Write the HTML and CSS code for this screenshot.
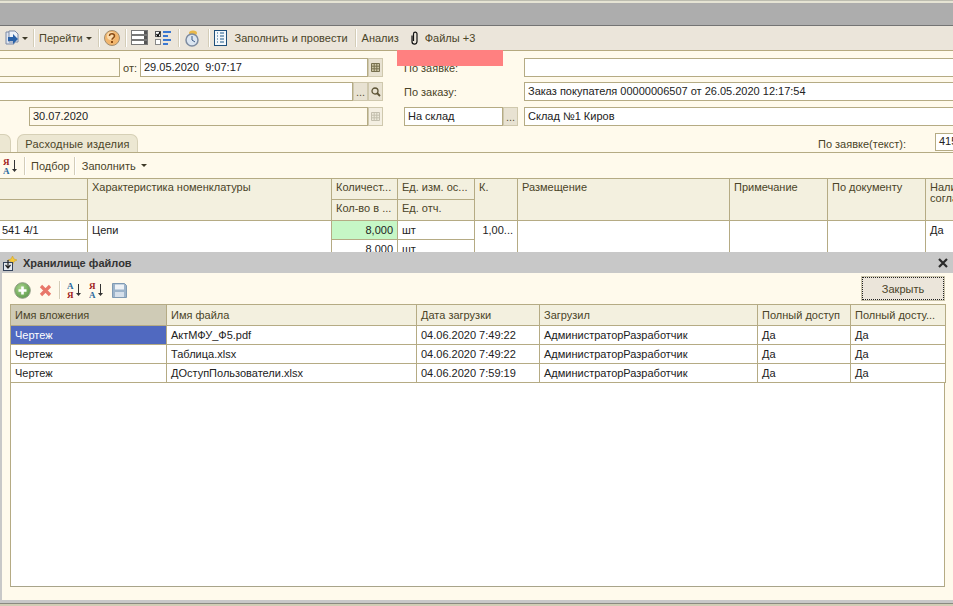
FILE: index.html
```html
<!DOCTYPE html>
<html lang="ru">

<head>
    <meta charset="UTF-8">
    <title>Хранилище файлов</title>
    <link rel="stylesheet" href="styles.css">
</head>

<body>
    <div class="screen">
        <div class="back">
            <div class="top-strip"></div>
            <div class="grey-band"></div>
            <div class="toolbar">
                <svg class="ic-go" width="15" height="16" viewBox="0 0 15 16"><path d="M1 2h6l2 2v10H1z" fill="#dfe6f2" stroke="#7d8aa5"/><path d="M4 1h6l3 3v8H4z" fill="#eef2f8" stroke="#7d8aa5"/><path d="M3 7h5V4l5 5-5 5v-3H3z" fill="#2a62a8"/></svg>
                <span class="arrow arrow-a"></span>
                <span class="sep sep-a"></span>
                <span class="tool tool-go">Перейти</span>
                <span class="arrow arrow-b"></span>
                <span class="sep sep-b"></span>
                <svg class="ic-help" width="16" height="16" viewBox="0 0 16 16"><circle cx="8" cy="8" r="7.500" fill="#f2b66e" stroke="#a08d70"/><circle cx="7" cy="6" r="4" fill="#fbdcae"/><path d="M5.500 6c0-3.300 5-3 5 0 0 1.800-2.500 1.800-2.500 3.800" fill="none" stroke="#8a4a12" stroke-width="1.500"/><rect x="7" y="11" width="2" height="2" fill="#8a4a12"/></svg>
                <span class="sep sep-c"></span>
                <svg class="ic-rows" width="17" height="16" viewBox="0 0 17 16"><g fill="#fff" stroke="#777"><rect x=".5" y=".5" width="16" height="4"/><rect x=".5" y="5.500" width="16" height="4"/><rect x=".5" y="10.500" width="16" height="4"/></g><g fill="#555"><rect x="13" y="1" width="3" height="3"/><rect x="13" y="6" width="3" height="3"/><rect x="13" y="11" width="3" height="3"/></g></svg>
                <svg class="ic-checks" width="18" height="16" viewBox="0 0 18 16"><rect x=".5" y="1.500" width="5" height="5" fill="#fff" stroke="#555"/><path d="M1.500 4l1.500 2 2-4" fill="none" stroke="#000" stroke-width="1.300"/><rect x=".5" y="9.500" width="5" height="5" fill="#fff" stroke="#888"/><g fill="#3b78d0"><rect x="8" y="1" width="8" height="2"/><rect x="8" y="5" width="5" height="2"/><rect x="8" y="9" width="8" height="2"/><rect x="8" y="13" width="5" height="2"/></g></svg>
                <span class="sep sep-d"></span>
                <svg class="ic-clock" width="15" height="17" viewBox="0 0 15 17"><ellipse cx="8" cy="3" rx="4" ry="2.500" fill="#e8b84a"/><circle cx="7" cy="10" r="6" fill="#dbe5f0" stroke="#7d8ba0" stroke-width="1.500"/><path d="M7 6v4l3 2" fill="none" stroke="#3d5a85"/></svg>
                <span class="sep sep-e"></span>
                <svg class="ic-doc" width="13" height="16" viewBox="0 0 13 16"><rect x=".5" y=".5" width="12" height="15" fill="#f4f8fb" stroke="#1e4f7a"/><path d="M3 3h1m2 0h4M3 6h1m2 0h4M3 9h1m2 0h4M3 12h1m2 0h4" stroke="#1e5a8a"/></svg>
                <span class="tool tool-fill">Заполнить и провести</span>
                <span class="sep sep-f"></span>
                <span class="tool">Анализ</span>
                <svg class="ic-clip" width="7" height="14" viewBox="0 0 7 14"><path d="M1 4.500v6c0 3.500 5 3.500 5 0V3C6 .5 2.500.5 2.500 3v7" fill="none" stroke="#111" stroke-width="1.200"/></svg>
                <span class="tool">Файлы +3</span>
            </div>

            <div class="form">
                <div class="form-row">
                    <div class="field field-num ro"></div>
                    <span class="lbl lbl-from">от:</span>
                    <div class="field field-date">29.05.2020&nbsp; 9:07:17</div>
                    <div class="fbtn">
                        <svg width="9" height="9" viewBox="0 0 9 9"><path d="M.5.500h8v8h-8zM.5 3.200h8M.5 5.800h8M3.200.5v8M5.800.5v8" fill="#cfc8a8" stroke="#77704f"/></svg>
                    </div>
                    <span class="lbl lbl-right">По заявке:</span>
                    <div class="field field-wide"></div>
                </div>
                <div class="form-row">
                    <div class="field field-long"></div>
                    <div class="fbtn">...</div>
                    <div class="fbtn">
                        <svg width="10" height="10" viewBox="0 0 10 10"><circle cx="4" cy="4" r="3" fill="none" stroke="#5d5436" stroke-width="1.300"/><path d="M6 6l3 3" stroke="#5d5436" stroke-width="1.800"/></svg>
                    </div>
                    <span class="lbl lbl-right">По заказу:</span>
                    <div class="field field-wide">Заказ покупателя 00000006507 от 26.05.2020 12:17:54</div>
                </div>
                <div class="form-row form-row-last">
                    <div class="field field-plan ro">30.07.2020</div>
                    <div class="fbtn off">
                        <svg width="9" height="9" viewBox="0 0 9 9"><path d="M.5.500h8v8h-8zM.5 3.200h8M.5 5.800h8M3.200.5v8M5.800.5v8" fill="#eeeadb" stroke="#c4bfae"/></svg>
                    </div>
                    <div class="field field-store">На склад</div>
                    <div class="fbtn">...</div>
                    <div class="field field-wide field-stock">Склад №1 Киров</div>
                </div>
            </div>

            <div class="tabs">
                <div class="tab tab-cut"></div>
                <div class="tab">Расходные изделия</div>
                <span class="lbl lbl-text">По заявке(текст):</span>
                <div class="field field-text">415</div>
            </div>

            <div class="subbar">
                <svg class="ic-sort" width="15" height="18" viewBox="0 0 15 18"><text x="0" y="8" class="sort-red">Я</text><text x="0" y="17" class="sort-blue">А</text><path d="M11.500 3v11" stroke="#333"/><path d="M9 12l2.500 3 2.500-3z" fill="#333"/></svg>
                <span class="sep sep-g"></span>
                <span class="tool">Подбор</span>
                <span class="sep sep-h"></span>
                <span class="tool">Заполнить</span>
                <span class="arrow arrow-c"></span>
            </div>

            <table class="grid main-grid">
                <colgroup>
                    <col class="m0"><col class="m1"><col class="m2"><col class="m3"><col class="m4"><col class="m5"><col class="m6"><col class="m7"><col class="m8">
                </colgroup>
                <tr class="head-row">
                    <th></th>
                    <th rowspan="2">Характеристика номенклатуры</th>
                    <th>Количест...</th>
                    <th>Ед. изм. ос...</th>
                    <th rowspan="2">К.</th>
                    <th rowspan="2">Размещение</th>
                    <th rowspan="2">Примечание</th>
                    <th rowspan="2">По документу</th>
                    <th rowspan="2">Наличие согласовано</th>
                </tr>
                <tr class="head-row">
                    <th></th>
                    <th>Кол-во в ...</th>
                    <th>Ед. отч.</th>
                </tr>
                <tr>
                    <td class="flush">541 4/1</td>
                    <td rowspan="2" class="top">Цепи</td>
                    <td class="num green">8,000</td>
                    <td>шт</td>
                    <td rowspan="2" class="num top">1,00...</td>
                    <td rowspan="2"></td>
                    <td rowspan="2"></td>
                    <td rowspan="2"></td>
                    <td rowspan="2" class="top">Да</td>
                </tr>
                <tr>
                    <td></td>
                    <td class="num">8,000</td>
                    <td>шт</td>
                </tr>
            </table>
        </div>

        <div class="dialog">
            <div class="title-bar">
                <svg class="ic-title" width="15" height="15" viewBox="0 0 15 15"><path d="M9.500 0l1.500 3 3 1-3 1.500L9.500 9 8 5.500 5 4l3-1z" fill="#f5c83a" stroke="#c99a1c" stroke-width=".5"/><rect x=".5" y="6.500" width="9" height="8" fill="#e4e8ee" stroke="#33425a"/><path d="M5 4v7M2.500 9L5 12l2.500-3" fill="none" stroke="#222" stroke-width="1.200"/></svg>
                <span class="title-text">Хранилище файлов</span>
                <svg class="ic-close" width="10" height="10" viewBox="0 0 10 10"><path d="M1 1l8 8M9 1l-8 8" stroke="#2a2a2a" stroke-width="2.200"/></svg>
            </div>
            <div class="dialog-body">
                <div class="dialog-bar">
                    <svg class="ic-add" width="17" height="17" viewBox="0 0 17 17"><defs><radialGradient id="gr" cx=".4" cy=".35" r=".7"><stop offset="0" stop-color="#a9d48c"/><stop offset="1" stop-color="#5c9a4a"/></radialGradient></defs><circle cx="8.500" cy="8.500" r="7.800" fill="url(#gr)" stroke="#8d9a84"/><path d="M8.500 4.500v8M4.500 8.500h8" stroke="#fff" stroke-width="2.600"/></svg>
                    <svg class="ic-del" width="13" height="13" viewBox="0 0 13 13"><path d="M2 2l9 9M11 2l-9 9" stroke="#e8776a" stroke-width="3.200"/></svg>
                    <span class="sep sep-i"></span>
                    <svg class="ic-sort2" width="15" height="18" viewBox="0 0 15 18"><text x="0" y="8" class="sort-blue">А</text><text x="0" y="17" class="sort-red">Я</text><path d="M11.500 3v11" stroke="#333"/><path d="M9 12l2.500 3 2.500-3z" fill="#333"/></svg>
                    <svg class="ic-sort3" width="15" height="18" viewBox="0 0 15 18"><text x="0" y="8" class="sort-red">Я</text><text x="0" y="17" class="sort-blue">А</text><path d="M11.500 3v11" stroke="#333"/><path d="M9 12l2.500 3 2.500-3z" fill="#333"/></svg>
                    <svg class="ic-save" width="15" height="15" viewBox="0 0 15 15"><path d="M.5.500h12l2 2v12H.5z" fill="#9db4ca" stroke="#7f9ab3"/><rect x="3" y="1.500" width="9" height="5" fill="#eef2f6"/><rect x="3" y="9" width="9" height="5" fill="#d6e0ea"/></svg>
                    <button class="close-btn">Закрыть</button>
                </div>
                <div class="files-wrap">
                    <table class="grid files-grid">
                        <colgroup>
                            <col class="f0"><col class="f1"><col class="f2"><col class="f3"><col class="f4"><col class="f5">
                        </colgroup>
                        <tr class="files-head">
                            <th class="sorted">Имя вложения</th>
                            <th>Имя файла</th>
                            <th>Дата загрузки</th>
                            <th>Загрузил</th>
                            <th>Полный доступ</th>
                            <th>Полный досту...</th>
                        </tr>
                        <tr class="file-row">
                            <td class="selected">Чертеж</td>
                            <td>АктМФУ_Ф5.pdf</td>
                            <td>04.06.2020 7:49:22</td>
                            <td>АдминистраторРазработчик</td>
                            <td>Да</td>
                            <td>Да</td>
                        </tr>
                        <tr class="file-row">
                            <td>Чертеж</td>
                            <td>Таблица.xlsx</td>
                            <td>04.06.2020 7:49:22</td>
                            <td>АдминистраторРазработчик</td>
                            <td>Да</td>
                            <td>Да</td>
                        </tr>
                        <tr class="file-row">
                            <td>Чертеж</td>
                            <td>ДОступПользователи.xlsx</td>
                            <td>04.06.2020 7:59:19</td>
                            <td>АдминистраторРазработчик</td>
                            <td>Да</td>
                            <td>Да</td>
                        </tr>
                    </table>
                </div>
            </div>
            <div class="dialog-foot"></div>
        </div>

        <div class="red-mark"></div>
    </div>
</body>

</html>
```

FILE: styles.css
```css
* {
    box-sizing: border-box;
}

body {
    margin: 0;
    font-family: "Liberation Sans", Arial, sans-serif;
    font-size: 11px;
    color: #222;
}

.screen {
    position: relative;
    display: flex;
    flex-direction: column;
    width: 953px;
    height: 606px;
    overflow: hidden;
    background-color: #fffaec;
}

.back {
    height: 252px;
    overflow: hidden;
    flex: none;
}

.top-strip {
    height: 3px;
    background-color: #e6e4d4;
    border-top: 1px solid #bdbdb0;
}

.grey-band {
    height: 23px;
    background-color: #adadad;
    border-bottom: 1px solid #747474;
}

.toolbar {
    display: flex;
    align-items: center;
    height: 25px;
    padding-left: 5px;
    background-color: #ebe5da;
    border-bottom: 1px solid #b5a97f;
}

.tool {
    color: #4a4428;
    white-space: nowrap;
}

.sep {
    flex: none;
    width: 1px;
    height: 18px;
    background-color: #d4cdb8;
    border-right: 1px solid #fff;
    box-sizing: content-box;
}

.arrow {
    flex: none;
    width: 0;
    height: 0;
    border-top: 3px solid #3e3a28;
    border-left: 3px solid transparent;
    border-right: 3px solid transparent;
}

.arrow-a { margin-left: 2px; }
.sep-a { margin-left: 5px; }
.tool-go { margin-left: 4px; }
.arrow-b { margin-left: 3px; }
.sep-b { margin-left: 6px; }
.ic-help { margin-left: 4px; }
.sep-c { margin-left: 5px; }
.ic-rows { margin-left: 4px; }
.ic-checks { margin-left: 7px; }
.sep-d { margin-left: 5px; }
.ic-clock { margin-left: 5px; }
.sep-e { margin-left: 8px; }
.ic-doc { margin-left: 4px; }
.tool-fill { margin-left: 8px; }
.sep-f { margin: 0 5px 0 7px; }
.ic-clip { margin: 0 7px 0 12px; }

.form {
    display: flex;
    flex-direction: column;
    gap: 5px;
    height: 83px;
    padding-top: 7px;
}

.form-row {
    display: flex;
    align-items: center;
    height: 19px;
}

.form-row-last {
    margin-top: 1px;
}

.field {
    flex: none;
    height: 19px;
    padding: 2px 3px;
    background-color: #fff;
    border: 1px solid #b5ab84;
    white-space: nowrap;
    overflow: hidden;
}

.ro {
    background-color: #fffaec;
}

.field-num { width: 120px; border-left: none; }
.field-date { width: 228px; }
.field-long { width: 353px; border-left: none; }
.field-plan { width: 339px; margin-left: 29px; }
.field-wide { width: 429px; border-right: none; }
.field-store { width: 99px; margin-left: 21px; }
.field-stock { margin-left: 6px; }

.fbtn {
    flex: none;
    display: flex;
    align-items: center;
    justify-content: center;
    width: 15px;
    height: 19px;
    color: #5d5436;
    background-color: #e8e2d2;
    border: 1px solid #cfc8ad;
}

.fbtn.off {
    background-color: #f4efe2;
}

.lbl {
    flex: none;
    color: #4a4428;
}

.lbl-from {
    width: 20px;
    padding-left: 3px;
}

.lbl-right {
    width: 120px;
    margin-left: 21px;
}

.tabs {
    display: flex;
    align-items: flex-end;
    height: 19px;
    border-bottom: 1px solid #b5ab84;
}

.tab {
    flex: none;
    width: 121px;
    height: 18px;
    margin-left: 6px;
    padding-top: 3px;
    text-align: center;
    color: #4a4428;
    letter-spacing: .2px;
    background-color: #ece7d2;
    border: 1px solid #d6d0b6;
    border-bottom: none;
    border-radius: 7px 7px 0 0;
}

.tab-cut {
    width: 11px;
    margin-left: 0;
    border-left: none;
    border-top-left-radius: 0;
}

.lbl-text {
    margin-left: 680px;
    width: 117px;
    padding-bottom: 2px;
}

.field-text {
    height: 18px;
    width: 30px;
    margin-bottom: 1px;
    padding-top: 1px;
    border-right: none;
}

.subbar {
    display: flex;
    align-items: center;
    height: 25px;
    padding-left: 3px;
}

.sep-g { margin: 0 5px 0 6px; }
.sep-h { margin: 0 6px 0 4px; }
.arrow-c { margin-left: 5px; }

.sort-red {
    font: bold 9px "Liberation Serif", serif;
    fill: #a02020;
}

.sort-blue {
    font: bold 9px "Liberation Serif", serif;
    fill: #2a6a9e;
}

.grid {
    border-collapse: collapse;
    table-layout: fixed;
}

.grid th,
.grid td {
    padding: 0 4px;
    border: 1px solid #b5ab84;
    font-weight: normal;
    text-align: left;
    white-space: nowrap;
    overflow: hidden;
}

.grid th {
    color: #4a4428;
    background-color: #f3f0df;
}

.grid td {
    background-color: #fff;
}

.main-grid {
    width: 1003px;
    margin-left: -1px;
}

.main-grid th {
    vertical-align: top;
    padding-top: 3px;
    white-space: normal;
    line-height: 11px;
}

.head-row {
    height: 21px;
}

.main-grid td {
    height: 19px;
}

.main-grid .flush {
    padding-left: 2px;
}

.main-grid .top {
    vertical-align: top;
    padding-top: 3px;
}

.num {
    text-align: right !important;
}

.green {
    background-color: #c6f7c6 !important;
}

.m0 { width: 88px; }
.m1 { width: 244px; }
.m2 { width: 66px; }
.m3 { width: 77px; }
.m4 { width: 43px; }
.m5 { width: 212px; }
.m6 { width: 98px; }
.m7 { width: 98px; }
.m8 { width: 77px; }

.dialog {
    flex: 1;
    display: flex;
    flex-direction: column;
    background-color: #c8c8c8;
    padding-left: 2px;
}

.title-bar {
    display: flex;
    align-items: center;
    height: 21px;
    margin-left: -2px;
    padding: 1px 5px 0 3px;
}

.title-text {
    margin-left: 5px;
    font-weight: bold;
    color: #333;
}

.ic-close {
    margin-left: auto;
}

.dialog-body {
    flex: 1;
    display: flex;
    flex-direction: column;
    padding: 0 8px 13px 8px;
    background-color: #fffaec;
}

.dialog-bar {
    display: flex;
    align-items: center;
    height: 31px;
    padding: 3px 0 0 4px;
}

.ic-del { margin-left: 8px; }
.sep-i { margin-left: 7px; }
.ic-sort2 { margin-left: 6px; }
.ic-sort3 { margin-left: 7px; }
.ic-save { margin-left: 8px; }

.close-btn {
    width: 84px;
    height: 25px;
    margin: 0 0 3px auto;
    padding: 0;
    font: inherit;
    color: #4a4428;
    background-color: #ebe5da;
    border: 1px solid #c9c3aa;
    outline: 1px dotted #222;
    outline-offset: -2px;
}

.files-wrap {
    flex: 1;
    background-color: #fff;
    border-bottom: 1px solid #a8a48a;
    border-left: 1px solid #b5ab84;
    border-right: 1px solid #b5ab84;
}

.files-grid {
    width: 935px;
    margin-left: -1px;
}

.files-head {
    height: 21px;
}

.file-row {
    height: 19px;
}

.sorted {
    background-color: #cfcbb6 !important;
}

.selected {
    color: #fff;
    background-color: #5069c0 !important;
}

.f0 { width: 156px; }
.f1 { width: 250px; }
.f2 { width: 123px; }
.f3 { width: 218px; }
.f4 { width: 93px; }
.f5 { width: 95px; }

.dialog-foot {
    height: 6px;
    margin: 0 0 0 -2px;
    background-color: #d1cdb5;
    border-top: 3px solid #c8c8c8;
    box-shadow: inset 0 1px 0 #8a8a80;
}

.red-mark {
    position: absolute;
    left: 397px;
    top: 50px;
    width: 106px;
    height: 16px;
    background-color: #ff8080;
}
```
